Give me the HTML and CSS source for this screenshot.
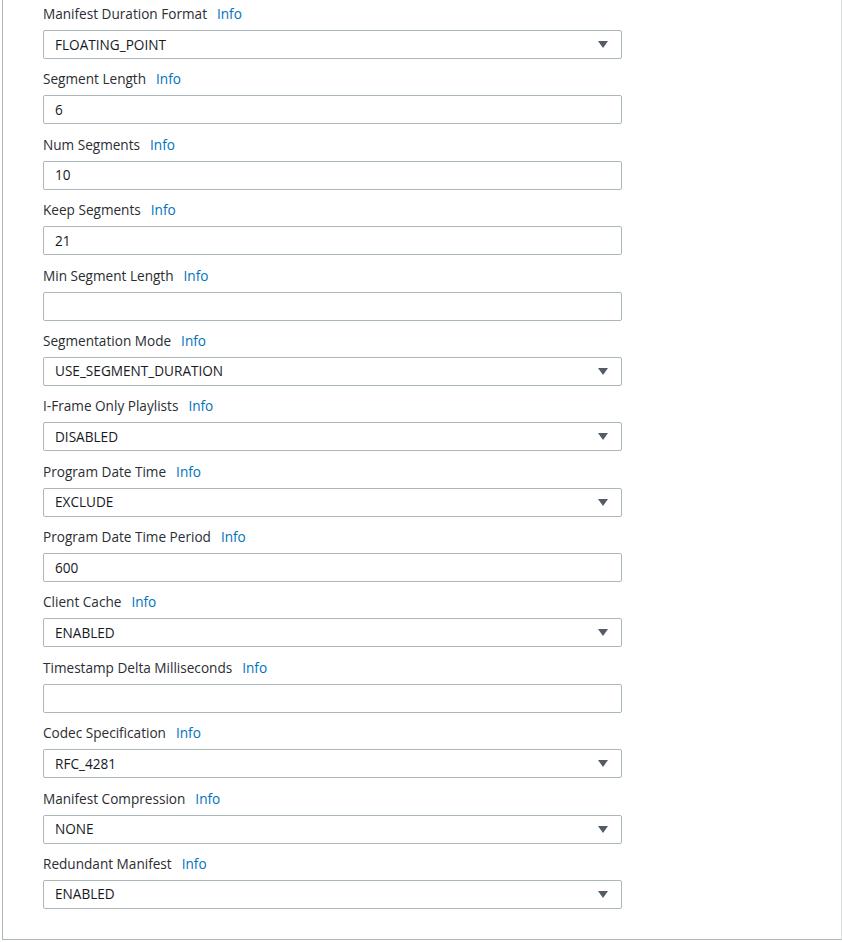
FILE: index.html
```html
<!DOCTYPE html>
<html>
<head>
<meta charset="utf-8">
<link rel="stylesheet" href="styles.css">
</head>
<body>
<div class="panel">
  <div class="field"><div class="label">Manifest Duration Format<a class="info">Info</a></div><div class="control select"><span class="value">FLOATING_POINT</span><span class="caret"></span></div></div>
  <div class="field"><div class="label">Segment Length<a class="info">Info</a></div><div class="control"><span class="value">6</span></div></div>
  <div class="field"><div class="label">Num Segments<a class="info">Info</a></div><div class="control"><span class="value">10</span></div></div>
  <div class="field"><div class="label">Keep Segments<a class="info">Info</a></div><div class="control"><span class="value">21</span></div></div>
  <div class="field"><div class="label">Min Segment Length<a class="info">Info</a></div><div class="control"><span class="value"></span></div></div>
  <div class="field"><div class="label">Segmentation Mode<a class="info">Info</a></div><div class="control select"><span class="value">USE_SEGMENT_DURATION</span><span class="caret"></span></div></div>
  <div class="field"><div class="label">I-Frame Only Playlists<a class="info">Info</a></div><div class="control select"><span class="value">DISABLED</span><span class="caret"></span></div></div>
  <div class="field"><div class="label">Program Date Time<a class="info">Info</a></div><div class="control select"><span class="value">EXCLUDE</span><span class="caret"></span></div></div>
  <div class="field"><div class="label">Program Date Time Period<a class="info">Info</a></div><div class="control"><span class="value">600</span></div></div>
  <div class="field"><div class="label">Client Cache<a class="info">Info</a></div><div class="control select"><span class="value">ENABLED</span><span class="caret"></span></div></div>
  <div class="field"><div class="label">Timestamp Delta Milliseconds<a class="info">Info</a></div><div class="control"><span class="value"></span></div></div>
  <div class="field"><div class="label">Codec Specification<a class="info">Info</a></div><div class="control select"><span class="value">RFC_4281</span><span class="caret"></span></div></div>
  <div class="field"><div class="label">Manifest Compression<a class="info">Info</a></div><div class="control select"><span class="value">NONE</span><span class="caret"></span></div></div>
  <div class="field"><div class="label">Redundant Manifest<a class="info">Info</a></div><div class="control select"><span class="value">ENABLED</span><span class="caret"></span></div></div>
</div>
</body>
</html>
```
FILE: styles.css
```css
html, body {
  margin: 0;
  padding: 0;
  background: #ffffff;
}
body {
  font-family: "Open Sans", "Liberation Sans", sans-serif;
  font-size: 13.6px;
  color: #16191f;
}
.panel {
  box-sizing: border-box;
  margin-left: 2px;
  width: 840px;
  height: 940px;
  border-left: 1px solid #aab7b8;
  border-right: 1px solid #d5dbdb;
  border-bottom: 1px solid #aab7b8;
  padding: 4px 0 0 40px;
  display: flex;
  flex-direction: column;
  gap: 10.38px;
}
.field {
  display: flex;
  flex-direction: column;
  gap: 6px;
}
.label {
  height: 20px;
  line-height: 20px;
  color: #2a2e33;
  white-space: nowrap;
}
.info {
  color: #0073bb;
  margin-left: 10px;
  cursor: pointer;
}
.control {
  box-sizing: border-box;
  width: 579px;
  height: 29px;
  border: 1px solid #aab7b8;
  border-radius: 2px;
  display: flex;
  align-items: center;
  padding: 0 13px 0 11px;
  background: #fff;
}
.value {
  flex: 1;
  line-height: 20px;
  color: #16191f;
}
.caret {
  width: 0;
  height: 0;
  border-left: 5px solid transparent;
  border-right: 5px solid transparent;
  border-top: 7px solid #545b64;
}
```
